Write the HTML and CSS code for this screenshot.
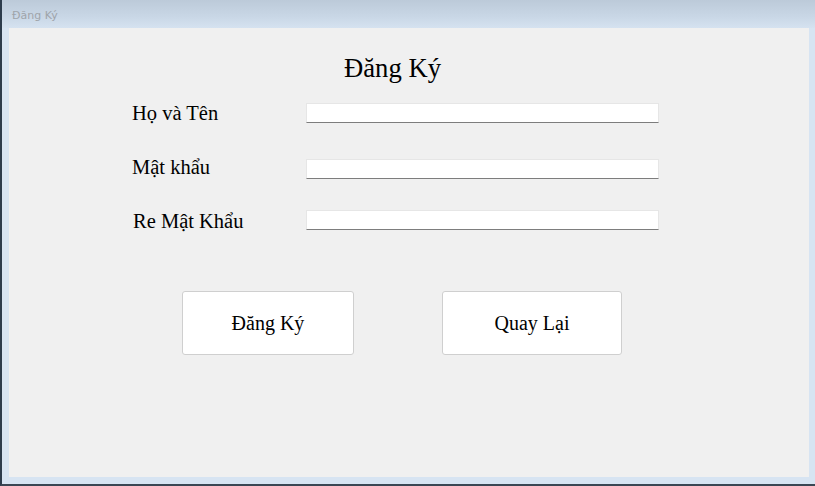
FILE: index.html
```html
<!DOCTYPE html>
<html lang="vi">
<head>
<meta charset="utf-8">
<title>Đăng Ký</title>
<link rel="stylesheet" href="styles.css">
</head>
<body>
<div class="window">
  <div class="titlebar"><span class="title">Đăng Ký</span></div>
  <div class="frame">
    <div class="client">
      <h1 class="heading">Đăng Ký</h1>
      <div class="form">
        <div class="row row1">
          <label class="label">Họ và Tên</label>
          <input class="field" type="text">
        </div>
        <div class="row row2">
          <label class="label">Mật khẩu</label>
          <input class="field" type="password">
        </div>
        <div class="row row3">
          <label class="label">Re Mật Khẩu</label>
          <input class="field" type="password">
        </div>
      </div>
      <div class="actions">
        <button class="btn btn-register">Đăng Ký</button>
        <button class="btn btn-back">Quay Lại</button>
      </div>
    </div>
  </div>
</div>
</body>
</html>
```

FILE: styles.css
```css
html, body {
  margin: 0;
  padding: 0;
}
body {
  width: 815px;
  height: 486px;
  overflow: hidden;
  background: #d7e4f2;
}
.window {
  width: 815px;
  height: 486px;
  box-sizing: border-box;
  border-left: 2px solid #2d3c4c;
  border-bottom: 2px solid #3a4653;
  background: #d7e4f2;
  display: flex;
  flex-direction: column;
}
.titlebar {
  height: 28px;
  flex: none;
  background: linear-gradient(to bottom, #bccad9 0%, #c9d7e6 60%, #d5e2f0 100%);
  display: flex;
  align-items: flex-start;
}
.title {
  font-family: "DejaVu Sans", "Noto Sans", sans-serif;
  font-size: 11px;
  color: #9fa4aa;
  margin-left: 10px;
  margin-top: 10px;
  line-height: 12px;
}
.frame {
  flex: 1;
  padding: 0 6px 7px 7px;
  display: flex;
}
.client {
  flex: 1;
  background: #f0f0f0;
  font-family: "Liberation Serif", "Times New Roman", serif;
  color: #000;
  display: flex;
  flex-direction: column;
}
.heading {
  margin: 25px 0 0 335px;
  font-size: 26.67px;
  font-weight: normal;
  line-height: 31px;
}
.form {
  margin-left: 123px;
  display: flex;
  flex-direction: column;
}
.row {
  display: flex;
  align-items: flex-start;
}
.label {
  width: 174px;
  font-size: 20.5px;
  line-height: 23px;
}
.row1 { margin-top: 18px; }
.row1 .field { margin-top: 1px; }
.row2 { margin-top: 31px; }
.row2 .field { margin-top: 3px; }
.row3 { margin-top: 31px; }
.row3 .label { margin-left: 1px; width: 173px; }
.field {
  width: 353px;
  height: 20px;
  box-sizing: border-box;
  margin: 0;
  padding: 0 2px;
  border: 1px solid #e6e6e6;
  border-bottom: 1px solid #7d7d7d;
  background: #fff;
  outline: none;
}
.actions {
  margin: 58px 0 0 173px;
  display: flex;
  gap: 88px;
}
.btn {
  height: 64px;
  box-sizing: border-box;
  background: #fff;
  border: 1px solid #cfcfcf;
  border-radius: 3px;
  font-family: "Liberation Serif", "Times New Roman", serif;
  font-size: 20px;
  color: #000;
  padding: 0;
}
.btn-register { width: 172px; }
.btn-back { width: 180px; }
```
